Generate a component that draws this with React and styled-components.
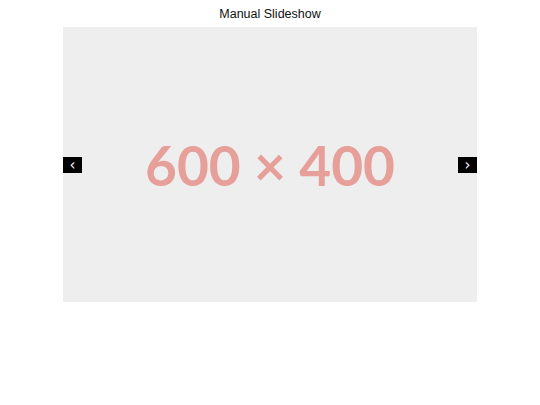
import styled, { createGlobalStyle } from "styled-components";
import { useState } from "react";

const GlobalStyle = createGlobalStyle`
  body {
    margin: 0;
    background: #ffffff;
    font-family: "Liberation Sans", Arial, sans-serif;
  }
`;

const slides = [
  { label: "600 × 400", color: "#e69f99" },
  { label: "600 × 400", color: "#8fb3d9" },
  { label: "600 × 400", color: "#9bcf9b" },
];

function App() {
  const [index, setIndex] = useState(0);

  const step = (dir) => {
    setIndex((i) => (i + dir + slides.length) % slides.length);
  };

  return (
    <Page>
      <GlobalStyle />
      <Title>Manual Slideshow</Title>
      <Stage>
        <Slide color={slides[index].color}>{slides[index].label}</Slide>
        <NavButton side="left" onClick={() => step(-1)}>
          &#8249;
        </NavButton>
        <NavButton side="right" onClick={() => step(1)}>
          &#8250;
        </NavButton>
      </Stage>
    </Page>
  );
}

export default App;

const Page = styled.div`
  display: flex;
  flex-direction: column;
  align-items: center;
  padding-top: 6px;
`;

const Title = styled.h2`
  margin: 0;
  height: 21px;
  font-size: 12.5px;
  font-weight: 400;
  line-height: 16px;
  color: #111111;
`;

const Stage = styled.div`
  position: relative;
  width: 414px;
  height: 275px;
  background: #eeeeee;
`;

const Slide = styled.div`
  display: flex;
  align-items: center;
  justify-content: center;
  height: 100%;
  padding-top: 1px;
  box-sizing: border-box;
  font-family: Lato, "Noto Sans", sans-serif;
  font-weight: 700;
  font-size: 55px;
  color: ${(p) => p.color};
`;

const NavButton = styled.button`
  position: absolute;
  top: 130px;
  ${(p) => (p.side === "left" ? "left: 0;" : "right: 0;")}
  width: 19px;
  height: 16px;
  padding: 0;
  border: none;
  background: #000000;
  color: #ffffff;
  font-family: "DejaVu Sans", sans-serif;
  font-size: 15px;
  font-weight: 400;
  line-height: 15px;
  cursor: pointer;
`;
